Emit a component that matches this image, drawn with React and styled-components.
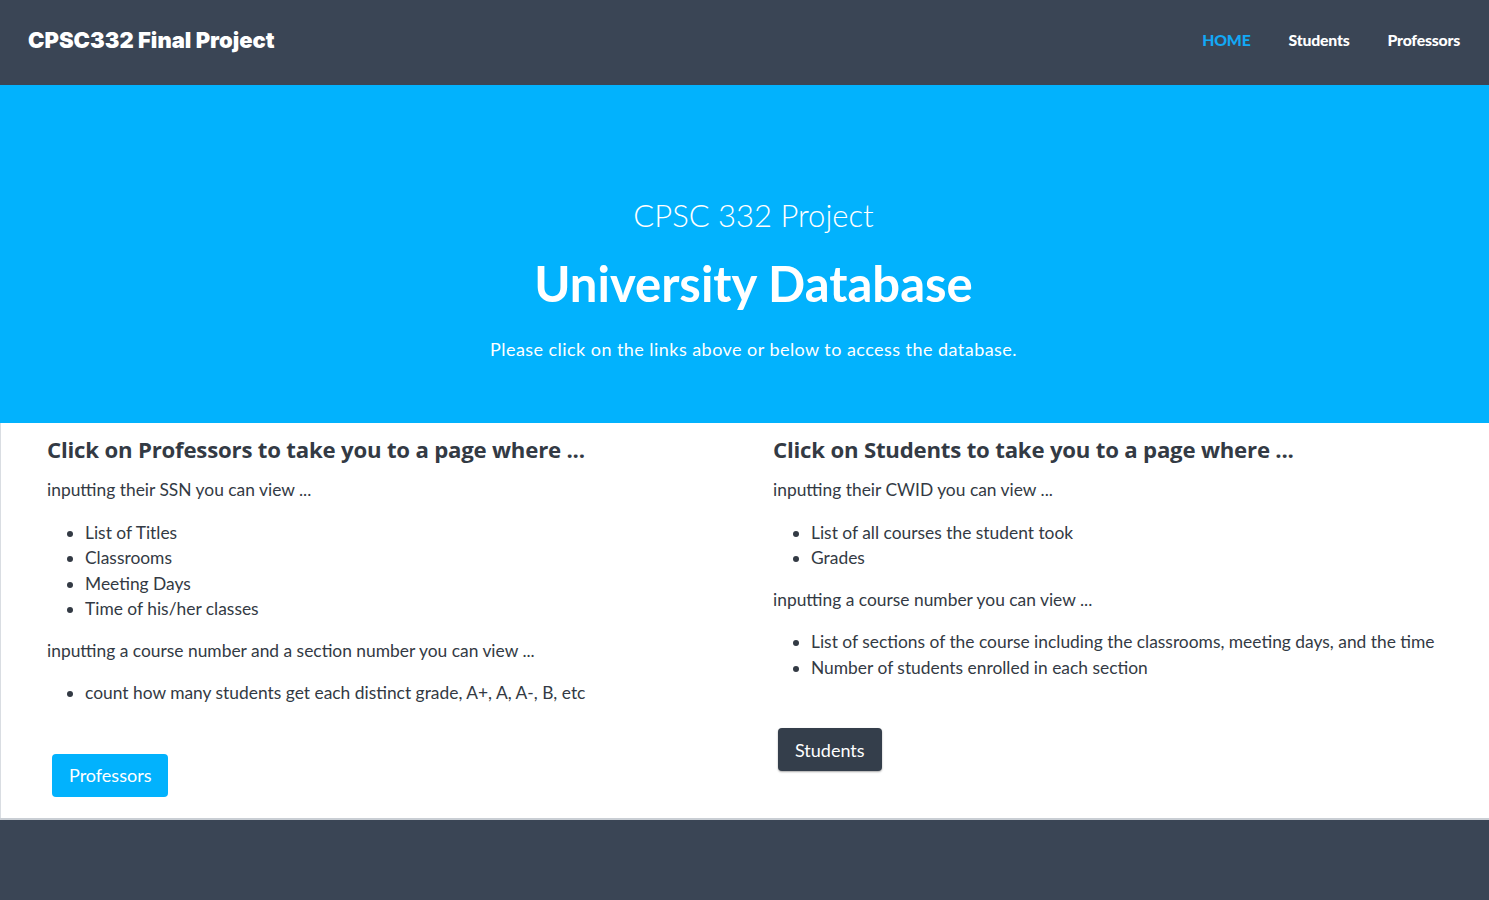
import React from 'react';
import { styled, createGlobalStyle } from 'styled-components';

const GlobalStyle = createGlobalStyle`
    html, body {
        margin: 0;
        padding: 0;
        background: #ffffff;
    }
    body {
        font-family: Lato, "Open Sans", sans-serif;
        color: #333a44;
    }
`;

const professorsColumn = {
    title: 'Click on Professors to take you to a page where ...',
    blocks: [
        {
            lead: 'inputting their SSN you can view ...',
            items: ['List of Titles', 'Classrooms', 'Meeting Days', 'Time of his/her classes'],
        },
        {
            lead: 'inputting a course number and a section number you can view ...',
            items: ['count how many students get each distinct grade, A+, A, A-, B, etc'],
        },
    ],
    button: 'Professors',
    variant: 'primary',
};

const studentsColumn = {
    title: 'Click on Students to take you to a page where ...',
    blocks: [
        {
            lead: 'inputting their CWID you can view ...',
            items: ['List of all courses the student took', 'Grades'],
        },
        {
            lead: 'inputting a course number you can view ...',
            items: [
                'List of sections of the course including the classrooms, meeting days, and the time',
                'Number of students enrolled in each section',
            ],
        },
    ],
    button: 'Students',
    variant: 'dark',
};

function InfoColumn({ data }) {
    return (
        <Column>
            <ColTitle>{data.title}</ColTitle>
            {data.blocks.map((b) => (
                <React.Fragment key={b.lead}>
                    <Lead>{b.lead}</Lead>
                    <List>
                        {b.items.map((it) => (
                            <li key={it}>{it}</li>
                        ))}
                    </List>
                </React.Fragment>
            ))}
            <Button $variant={data.variant}>{data.button}</Button>
        </Column>
    );
}

export default function App() {
    return (
        <Page>
            <GlobalStyle />
            <NavBar>
                <Brand>CPSC332 Final Project</Brand>
                <NavLinks>
                    <NavLink $active>HOME</NavLink>
                    <NavLink>Students</NavLink>
                    <NavLink>Professors</NavLink>
                </NavLinks>
            </NavBar>
            <Hero>
                <HeroSub>CPSC 332 Project</HeroSub>
                <HeroTitle>University Database</HeroTitle>
                <HeroText>Please click on the links above or below to access the database.</HeroText>
            </Hero>
            <Content>
                <InfoColumn data={professorsColumn} />
                <InfoColumn data={studentsColumn} />
            </Content>
            <Footer />
        </Page>
    );
}

const Page = styled.div`
    display: flex;
    flex-direction: column;
    min-height: 900px;
`;

const NavBar = styled.header`
    height: 85px;
    background: #3a4555;
    display: flex;
    align-items: center;
    justify-content: space-between;
    padding: 0 29px 6px 28px;
    box-sizing: border-box;
`;

const Brand = styled.div`
    font-family: Inter, Lato, sans-serif;
    font-weight: 900;
    font-size: 22px;
    color: #ffffff;
`;

const NavLinks = styled.nav`
    display: flex;
    gap: 38px;
`;

const NavLink = styled.a`
    font-family: Lato, sans-serif;
    font-weight: 900;
    font-size: 15.8px;
    letter-spacing: -0.2px;
    color: ${(p) => (p.$active ? '#12a8f5' : '#ffffff')};
    text-decoration: none;
    cursor: pointer;
`;

const Hero = styled.section`
    height: 338px;
    background: #02b2fd;
    color: #ffffff;
    display: flex;
    flex-direction: column;
    align-items: center;
    padding: 111px 0 0 18px;
    box-sizing: border-box;
    text-align: center;
`;

const HeroSub = styled.div`
    font-family: Lato, sans-serif;
    font-weight: 300;
    font-size: 31px;
    line-height: 38px;
`;

const HeroTitle = styled.h1`
    font-family: Lato, sans-serif;
    font-weight: 700;
    font-size: 49px;
    line-height: 58px;
    margin: 20px 0 0;
`;

const HeroText = styled.p`
    font-family: Lato, sans-serif;
    font-size: 18px;
    letter-spacing: 0.45px;
    line-height: 24px;
    margin: 25px 0 0;
`;

const Content = styled.main`
    display: grid;
    grid-template-columns: 726px 1fr;
    padding: 14px 0 21px 46px;
    border-left: 1px solid #d9dde2;
    background: #ffffff;
`;

const Column = styled.div`
    display: flex;
    flex-direction: column;
    align-items: flex-start;
`;

const ColTitle = styled.h2`
    font-family: "Open Sans", Lato, sans-serif;
    font-weight: 700;
    font-size: 22.2px;
    line-height: 28px;
    color: #333a44;
    margin: -1px 0 13px;
    letter-spacing: -0.2px;
`;

const Lead = styled.p`
    font-size: 17.4px;
    line-height: 25.5px;
    margin: 0 0 17px;
    color: #333a44;
`;

const List = styled.ul`
    font-size: 17.4px;
    line-height: 25.5px;
    margin: 0 0 16px;
    padding-left: 38px;
    color: #333a44;
`;

const Button = styled.button`
    margin: 32px 0 0 5px;
    height: 43px;
    padding: 0 17px;
    border: none;
    border-radius: 4px;
    font-family: Lato, sans-serif;
    font-size: 18px;
    color: #ffffff;
    background: ${(p) => (p.$variant === 'dark' ? '#343e4b' : '#02b2fd')};
    box-shadow: ${(p) => (p.$variant === 'dark' ? '0 1px 2px rgba(0,0,0,0.35)' : 'none')};
    cursor: pointer;
`;

const Footer = styled.footer`
    flex: 1;
    background: #3a4555;
    border-top: 2px solid #c9ced4;
`;
